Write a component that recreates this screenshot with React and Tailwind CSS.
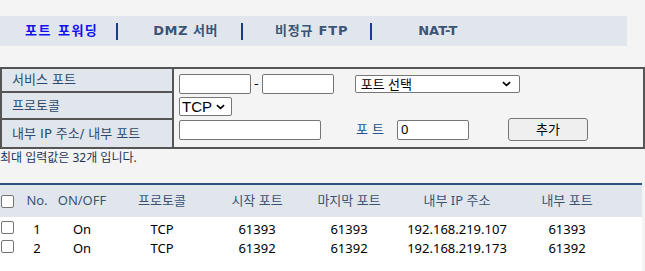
import React from 'react';

const rows = [
    { no: 1, state: 'On', proto: 'TCP', start: '61393', end: '61393', ip: '192.168.219.107', port: '61393' },
    { no: 2, state: 'On', proto: 'TCP', start: '61392', end: '61392', ip: '192.168.219.173', port: '61392' },
];

function Chevron({ className }) {
    return (
        <svg className={className} viewBox="0 0 10 6" fill="none" stroke="currentColor" strokeWidth={1.8}>
            <path d="M1 1l4 3.6L9 1" />
        </svg>
    );
}

function Box() {
    return <span className="block w-[13px] h-[13px] rounded-[2px] border border-[#767676] bg-white" />;
}

function Sep() {
    return <span className="block w-[2px] h-[17px] bg-[#1c3a8a]" />;
}

export default function App() {
    const kr = { fontFamily: '"DejaVu Sans", "Noto Sans CJK KR", sans-serif' };
    const body = { fontFamily: '"Noto Sans", "Noto Sans CJK KR", sans-serif' };

    return (
        <div className="w-[645px] h-[271px] bg-[#f4f4f4] overflow-hidden text-[13px]" style={kr}>
            {/* Tabs */}
            <div className="mt-4 w-[627px] h-[30px] bg-[#e1e6ed] flex items-center font-bold text-[13px] text-[#3a5577]">
                <span className="ml-[25px] text-[#1010f0] tracking-[1.5px]">포트 포워딩</span>
                <span className="ml-[18px]"><Sep /></span>
                <span className="ml-[35px] tracking-[0.5px]">DMZ 서버</span>
                <span className="ml-[23px]"><Sep /></span>
                <span className="ml-[32px] tracking-[0.8px]">비정규 FTP</span>
                <span className="ml-[22px]"><Sep /></span>
                <span className="ml-[46px]">NAT-T</span>
            </div>

            {/* Form */}
            <div className="mt-[21px] w-[645px] h-[82px] border-2 border-[#555] flex">
                <div className="w-[170px] flex flex-col text-[#2c4a6e]">
                    <div className="h-[24px] flex items-center pl-[10px] bg-[#e1e6ed] border-b-2 border-[#555]">서비스 포트</div>
                    <div className="h-[27px] flex items-center pl-[10px] bg-[#e1e6ed] border-b-2 border-[#555]">프로토콜</div>
                    <div className="flex-1 flex items-center pl-[10px] bg-[#e1e6ed]">내부 IP 주소/ 내부 포트</div>
                </div>
                <div className="w-[2px] bg-[#555]" />
                <div className="flex-1 pl-[5px] pt-[5px] flex flex-col">
                    <div className="h-[20px] flex items-center">
                        <div className="w-[72px] h-[20px] bg-white border border-[#767676] rounded-[2px]" />
                        <span className="mx-[3px] text-black">-</span>
                        <div className="w-[72px] h-[20px] bg-white border border-[#767676] rounded-[2px]" />
                        <div className="ml-[21px] w-[165px] h-[18px] bg-white border border-[#767676] rounded-[2px] flex items-center justify-between pl-[5px] pr-[8px] text-black" style={body}>
                            <span className="leading-none">포트 선택</span>
                            <Chevron className="w-[9px] h-[6px]" />
                        </div>
                    </div>
                    <div className="mt-[3px] w-[53px] h-[19px] bg-white border border-[#767676] rounded-[2px] flex items-center justify-between pl-[2px] pr-[6px] text-black text-[15px]" style={{ fontFamily: '"Liberation Sans", sans-serif' }}>
                        <span className="leading-none">TCP</span>
                        <Chevron className="w-[9px] h-[6px]" />
                    </div>
                    <div className="mt-[2px] h-[23px] flex items-center">
                        <div className="w-[142px] h-[20px] bg-white border border-[#767676] rounded-[2px]" />
                        <span className="ml-[35px] text-[#23528f]">포 트</span>
                        <div className="ml-[13px] w-[72px] h-[20px] bg-white border border-[#767676] rounded-[2px] flex items-center pl-[3px] text-black" style={body}>0</div>
                        <button className="ml-[39px] w-[80px] h-[23px] bg-[#efefef] border border-[#767676] rounded-[3px] text-black" style={body}>추가</button>
                    </div>
                </div>
            </div>

            <div className="mt-[1px] text-[12px] text-[#1c3458] leading-[16px]" style={body}>최대 입력값은 32개 입니다.</div>

            {/* List */}
            <div className="mt-[17px] w-[642px] border-t-2 border-[#2c5080] bg-white" style={body}>
                <div className="h-[32px] bg-[#e1e6ed] flex items-center text-[13px] text-[#3c5272]">
                    <div className="w-[22px] pl-[1px]"><Box /></div>
                    <div className="w-[30px] text-center">No.</div>
                    <div className="w-[60px] text-center">ON/OFF</div>
                    <div className="w-[100px] text-center">프로토콜</div>
                    <div className="w-[90px] text-center">시작 포트</div>
                    <div className="w-[94px] text-center">마지막 포트</div>
                    <div className="w-[122px] text-center">내부 IP 주소</div>
                    <div className="w-[98px] text-center">내부 포트</div>
                </div>
                <div className="pt-[3px] h-[60px]">
                    {rows.map((r) => (
                        <div key={r.no} className="h-[19px] flex items-center text-[13px] text-black">
                            <div className="w-[22px] pl-[1px] -mt-[4px]"><Box /></div>
                            <div className="w-[30px] text-center">{r.no}</div>
                            <div className="w-[60px] text-center">{r.state}</div>
                            <div className="w-[100px] text-center">{r.proto}</div>
                            <div className="w-[90px] text-center">{r.start}</div>
                            <div className="w-[94px] text-center">{r.end}</div>
                            <div className="w-[122px] text-center">{r.ip}</div>
                            <div className="w-[98px] text-center">{r.port}</div>
                        </div>
                    ))}
                </div>
            </div>
        </div>
    );
}
